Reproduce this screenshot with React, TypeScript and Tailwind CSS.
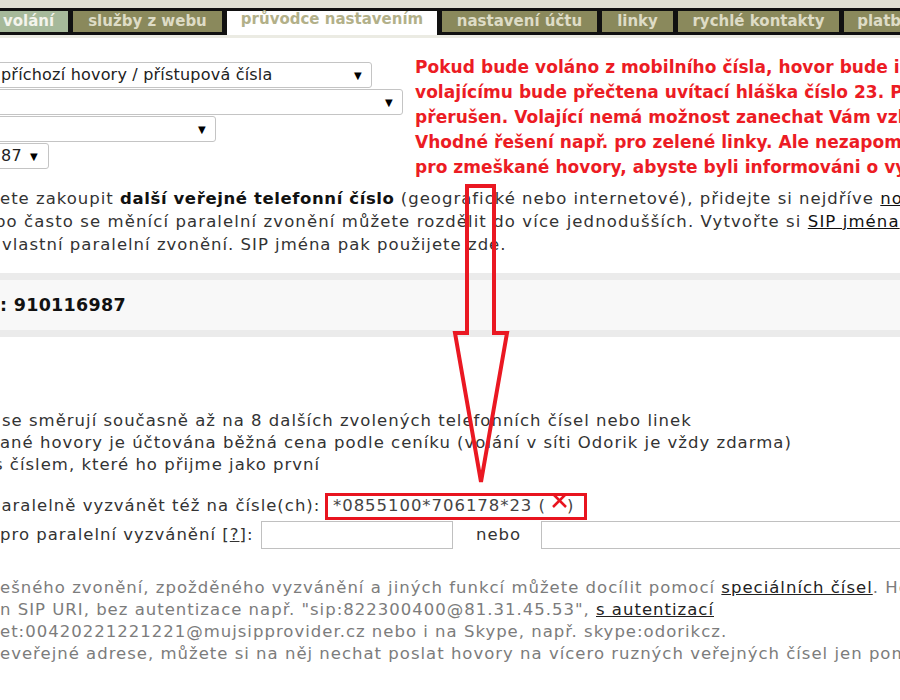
import React from "react";

const V = "font-['DejaVu_Sans',Verdana,sans-serif]";

function Select({ w, text, arrowPr }: { w: string; text?: string; arrowPr?: string }) {
  return (
    <div
      className={`${w} -ml-[30px] h-[26px] mt-[1px] bg-white border border-[#c4c4c4] rounded-[3px] flex items-center justify-between pl-[30px] ${arrowPr ?? "pr-[9px]"} text-[16px] tracking-[0.2px] text-[#222] whitespace-nowrap`}
    >
      <span>{text ?? ""}</span>
      <span className="text-[10px] text-black">▼</span>
    </div>
  );
}

function Tab({ w, label, active, first }: { w: string; label: string; active?: boolean; first?: boolean }) {
  if (active) {
    return (
      <div className={`${w} h-[24px] -mb-[3px] bg-white flex items-start pt-[1px] justify-center text-[#b2b089] shrink-0`}>
        {label}
      </div>
    );
  }
  return (
    <div
      className={`${w} h-[21px] flex items-center ${first ? "justify-start pl-[3px] bg-[#a6b99a] text-[#f4f4ec]" : "justify-center bg-[#8a895c] text-[#dedcc6]"} shrink-0`}
    >
      {label}
    </div>
  );
}

export default function App() {
  return (
    <div className={`relative w-[900px] h-[700px] overflow-hidden bg-white ${V}`}>
      {/* header tabs */}
      <div className="bg-[#e0dfd3] pt-[8px]">
        <div className="flex items-start gap-[5px] bg-[#111] py-[3px] text-[15px] font-bold leading-none whitespace-nowrap">
          <Tab w="w-[68px]" label="volání" first />
          <Tab w="w-[149px]" label="služby z webu" />
          <Tab w="w-[210px]" label="průvodce nastavením" active />
          <Tab w="w-[155px]" label="nastavení účtu" />
          <Tab w="w-[71px]" label="linky" />
          <Tab w="w-[161px]" label="rychlé kontakty" />
          <Tab w="w-[80px]" label="platby" />
        </div>
      </div>
      <div className="h-[3px] bg-[#ebebe3]" />

      {/* selects + red note */}
      <div className="flex mt-[17px]">
        <div className="w-[415px] shrink-0 pt-[6px]">
          <Select w="w-[402px]" text="příchozí hovory / přístupová čísla" />
          <Select w="w-[433px]" />
          <Select w="w-[246px]" />
          <Select w="w-[79px]" text="87" arrowPr="pr-[10px]" />
        </div>
        <div className="text-[17px] leading-[25px] font-bold text-[#ec1c24] whitespace-nowrap tracking-[0.05px]">
          <div>Pokud bude voláno z mobilního čísla, hovor bude ihned</div>
          <div>volajícímu bude přečtena uvítací hláška číslo 23. Po</div>
          <div>přerušen. Volající nemá možnost zanechat Vám vzkaz</div>
          <div>Vhodné řešení např. pro zelené linky. Ale nezapomeňte</div>
          <div>pro zmeškané hovory, abyste byli informováni o vy</div>
        </div>
      </div>

      {/* paragraph */}
      <div className="mt-[7px] text-[16.5px] tracking-[1px] leading-[23px] text-[#333] whitespace-nowrap">
        <div>
          ete zakoupit <b className="text-[#111] tracking-[0.6px]">další veřejné telefonní číslo</b> (geografické nebo internetové), přidejte si nejdříve{" "}
          <span className="underline text-[#111]">nové</span>
        </div>
        <div className="-ml-[5px] tracking-[1.1px]">
          bo často se měnící paralelní zvonění můžete rozdělit do více jednodušších. Vytvořte si{" "}
          <span className="underline text-[#111]">SIP jména</span>
        </div>
        <div className="ml-[2px]">vlastní paralelní zvonění. SIP jména pak použijete zde.</div>
      </div>

      {/* panel */}
      <div className="mt-[17px] border-y-[7px] border-[#ebebeb] bg-[#f8f8f8] h-[64px] flex items-center">
        <span className="text-[17.5px] tracking-[0.3px] font-bold text-[#111] whitespace-nowrap">: 910116987</span>
      </div>

      {/* parallel ringing text */}
      <div className="mt-[73px] text-[16.5px] tracking-[1px] leading-[22px] text-[#333] whitespace-nowrap">
        <div className="ml-[2px]">se směrují současně až na 8 dalších zvolených telefonních čísel nebo linek</div>
        <div>ané hovory je účtována běžná cena podle ceníku (volání v síti Odorik je vždy zdarma)</div>
        <div className="-ml-[6px]">s číslem, které ho přijme jako první</div>
      </div>

      <div className="mt-[16px] flex items-center h-[28px] text-[16.5px] tracking-[1px] text-[#333] whitespace-nowrap">
        <div className="w-[325px] shrink-0 overflow-hidden">
          <div className="-ml-[10px]">paralelně vyzvánět též na čísle(ch):</div>
        </div>
        <div className="w-[262px] h-[27px] border-[3px] border-[#e8141f] flex items-center pl-[5px] text-[#444] tracking-[0.95px]">
          *0855100*706178*23 (<span className="inline-block w-[21px]" />)
        </div>
      </div>

      <div className="mt-[1px] flex items-center h-[28px] text-[16.5px] tracking-[1px] text-[#333] whitespace-nowrap">
        <div className="w-[261px] shrink-0">
          pro paralelní vyzvánění [<span className="underline">?</span>]:
        </div>
        <div className="w-[192px] h-[28px] border border-[#c0c0c0] bg-white shrink-0" />
        <div className="w-[88px] shrink-0 pl-[23px]">nebo</div>
        <div className="w-[400px] h-[28px] border border-[#c0c0c0] bg-white shrink-0" />
      </div>

      {/* bottom gray text */}
      <div className="mt-[28px] text-[16.5px] tracking-[1px] leading-[22px] text-[#7c7c7c] whitespace-nowrap">
        <div>
          ešného zvonění, zpožděného vyzvánění a jiných funkcí můžete docílit pomocí{" "}
          <span className="underline text-[#222]">speciálních čísel</span>. Hovory
        </div>
        <div>
          n SIP URI, bez autentizace např. "sip:822300400@81.31.45.53",{" "}
          <span className="underline text-[#222]">s autentizací</span>
        </div>
        <div>et:00420221221221@mujsipprovider.cz nebo i na Skype, např. skype:odorikcz.</div>
        <div>eveřejné adrese, můžete si na něj nechat poslat hovory na vícero ruzných veřejných čísel jen pomocí</div>
      </div>

      {/* red annotations */}
      <svg className="absolute left-0 top-0 pointer-events-none" width="900" height="700">
        <polygon
          points="467,186 494,186 494,333 507,333 481,482 455,333 467,333"
          fill="none"
          stroke="#ea1822"
          strokeWidth="4"
          strokeLinejoin="miter"
        />
        <line x1="553" y1="494" x2="566" y2="507" stroke="#e8141f" strokeWidth="2.5" />
        <line x1="566" y1="494" x2="553" y2="507" stroke="#e8141f" strokeWidth="2.5" />
      </svg>
    </div>
  );
}
